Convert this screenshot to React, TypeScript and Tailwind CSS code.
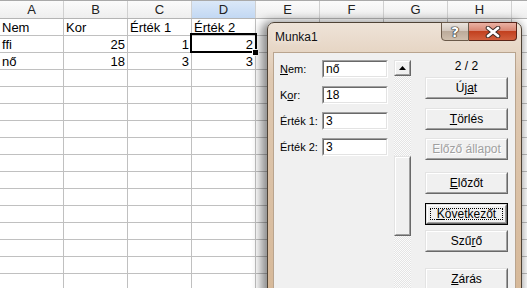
import React from 'react';

const COLS = ['A', 'B', 'C', 'D', 'E', 'F', 'G', 'H', ''];

type Cell = { text: string; right?: boolean };

const DATA: Cell[][] = [
  [{ text: 'Nem' }, { text: 'Kor' }, { text: 'Érték 1' }, { text: 'Érték 2' }],
  [{ text: 'ffi' }, { text: '25', right: true }, { text: '1', right: true }, { text: '2', right: true }],
  [{ text: 'nő' }, { text: '18', right: true }, { text: '3', right: true }, { text: '3', right: true }],
];

const ROW_COUNT = 16;

const Raised: React.FC<{ className?: string; children?: React.ReactNode }> = ({ className = '', children }) => (
  <div className={`border border-t-[#e3e3e3] border-l-[#e3e3e3] border-r-[#696969] border-b-[#696969] ${className}`}>
    <div className="w-full h-full border border-t-white border-l-white border-r-[#a0a0a0] border-b-[#a0a0a0] bg-[#f0f0f0] flex items-center justify-center">
      {children}
    </div>
  </div>
);

const Field: React.FC<{ label: React.ReactNode; value: string }> = ({ label, value }) => (
  <div className="flex items-center h-[18px]">
    <div className="w-[42px] text-[11px] text-black leading-none">{label}</div>
    <div className="w-[66px] h-[18px] border border-t-[#a0a0a0] border-l-[#a0a0a0] border-r-white border-b-white">
      <div className="w-full h-full border border-t-[#696969] border-l-[#696969] border-r-[#e3e3e3] border-b-[#e3e3e3] bg-white flex items-center pl-[2px] text-[12px] leading-none text-black">
        {value}
      </div>
    </div>
  </div>
);

const Btn: React.FC<{ children: React.ReactNode; className?: string; disabled?: boolean; isDefault?: boolean }> = ({
  children,
  className = '',
  disabled,
  isDefault,
}) => {
  const text = disabled ? 'text-[#a0a0a0] [text-shadow:1px_1px_0_#ffffff]' : 'text-black';
  if (isDefault) {
    return (
      <div className={`h-[22px] border border-black ${className}`}>
        <Raised className="w-full h-full">
          <div className="w-[calc(100%-4px)] h-[calc(100%-4px)] border border-dotted border-black flex items-center justify-center">
            <span className={`text-[12px] leading-none ${text}`}>{children}</span>
          </div>
        </Raised>
      </div>
    );
  }
  return (
    <Raised className={`h-[22px] ${className}`}>
      <span className={`text-[12px] leading-none ${text}`}>{children}</span>
    </Raised>
  );
};

export default function App() {
  return (
    <div className="relative w-[527px] h-[288px] overflow-hidden bg-white font-['Liberation_Sans',Arial,sans-serif]">
      {/* sheet */}
      <div className="flex flex-col">
        <div className="flex h-[19px] border-t border-b border-t-[#a9a9a9] border-b-[#b4b4b4]">
          {COLS.map((c, i) => (
            <div
              key={i}
              className={`shrink-0 w-[64px] border-r border-[#d0d0d0] flex items-center justify-center text-[13px] text-[#222] ${
                c === 'D' ? 'bg-[linear-gradient(#dbe8f8,#c2d8f3)]' : 'bg-[linear-gradient(#fbfbfb,#eeeeee)]'
              }`}
            >
              {c}
            </div>
          ))}
        </div>
        {Array.from({ length: ROW_COUNT }).map((_, r) => (
          <div key={r} className="flex h-[17px] border-b border-[#c0c0c0]">
            {COLS.map((_, c) => {
              const cell = DATA[r]?.[c];
              return (
                <div
                  key={c}
                  className={`shrink-0 w-[64px] border-r border-[#c0c0c0] px-[2px] flex items-center text-[13px] leading-none text-black ${
                    cell?.right ? 'justify-end' : ''
                  }`}
                >
                  {cell?.text}
                </div>
              );
            })}
          </div>
        ))}
      </div>

      {/* active cell */}
      <div className="absolute left-[190px] top-[33px] w-[67px] h-[20px] border-2 border-black" />
      <div className="absolute left-[252px] top-[49px] w-[7px] h-[7px] bg-black border border-white" />

      {/* dialog */}
      <div className="absolute left-[267px] top-[22px] w-[255px] h-[280px] rounded-t-[7px] border border-[#4f4336] bg-[linear-gradient(#eee3d8,#dfc9b2_20%,#d6b898)] shadow-[-3px_2px_10px_3px_rgba(0,0,0,0.45)] flex flex-col">
        <div className="flex h-[29px] shrink-0">
          <div className="pl-[7px] pt-[6px] text-[12px] leading-[16px] text-[#101010] [text-shadow:0_0_6px_#ffffff]">Munka1</div>
          <div className="ml-auto mr-[4px] -mt-[1px] flex h-[19px]">
            <div className="w-[28px] h-full rounded-bl-[4px] border border-[#6b5a4a] bg-[linear-gradient(#ebe5df,#d4c9bf_45%,#bcab9b_50%,#cfbfae)] flex items-center justify-center">
              <span className="font-['DejaVu_Sans',sans-serif] font-bold text-[14px] leading-none text-white [text-shadow:0_0_1px_#222,0_0_1px_#222,0_0_1px_#222,0_0_1px_#222]">?</span>
            </div>
            <div className="w-[48px] h-full rounded-br-[4px] border border-l-0 border-[#5a2418] bg-[linear-gradient(#eab2a4,#d98673_45%,#c2401f_50%,#d2603e)] flex items-center justify-center">
              <svg width="16" height="12" viewBox="0 0 16 12">
                <path d="M3 2 L13 10 M13 2 L3 10" stroke="#3b2a26" strokeWidth="4.6" strokeLinecap="round" />
                <path d="M3 2 L13 10 M13 2 L3 10" stroke="#ffffff" strokeWidth="2.8" strokeLinecap="round" />
              </svg>
            </div>
          </div>
        </div>

        <div className="mx-[5px] flex-1 border border-[#b9a48e] bg-[#f0f0f0] flex">
          {/* fields */}
          <div className="w-[114px] pl-[6px] pt-[7px] flex flex-col gap-[8px]">
            <Field label={<><u>N</u>em:</>} value="nő" />
            <Field label={<>K<u>o</u>r:</>} value="18" />
            <Field label="Érték 1:" value="3" />
            <Field label="Érték 2:" value="3" />
          </div>

          {/* scrollbar */}
          <div className="ml-[6px] w-[17px] pt-[7px] flex flex-col">
            <Raised className="h-[16px] shrink-0">
              <svg width="7" height="4" viewBox="0 0 7 4">
                <path d="M3.5 0 L7 4 L0 4 Z" fill="#000" />
              </svg>
            </Raised>
            <div className="h-[80px] shrink-0 bg-[repeating-conic-gradient(#e4e4e4_0_25%,#fbfbfb_0_50%)] bg-[length:2px_2px]" />
            <Raised className="h-[80px] shrink-0" />
            <div className="flex-1 bg-[repeating-conic-gradient(#e4e4e4_0_25%,#fbfbfb_0_50%)] bg-[length:2px_2px]" />
          </div>

          {/* buttons */}
          <div className="ml-[14px] w-[83px] pt-[6px] flex flex-col">
            <div className="h-[14px] text-center text-[12px] leading-[14px] text-black">2 / 2</div>
            <Btn className="mt-[4px]">Új<u>a</u>t</Btn>
            <Btn className="mt-[9px]"><u>T</u>örlés</Btn>
            <Btn className="mt-[8px]" disabled>Előző állapot</Btn>
            <Btn className="mt-[12px]"><u>E</u>lőzőt</Btn>
            <Btn className="mt-[9px]" isDefault><u>K</u>övetkezőt</Btn>
            <Btn className="mt-[5px]">Szű<u>r</u>ő</Btn>
            <Btn className="mt-[16px]"><u>Z</u>árás</Btn>
          </div>
        </div>
      </div>
    </div>
  );
}
